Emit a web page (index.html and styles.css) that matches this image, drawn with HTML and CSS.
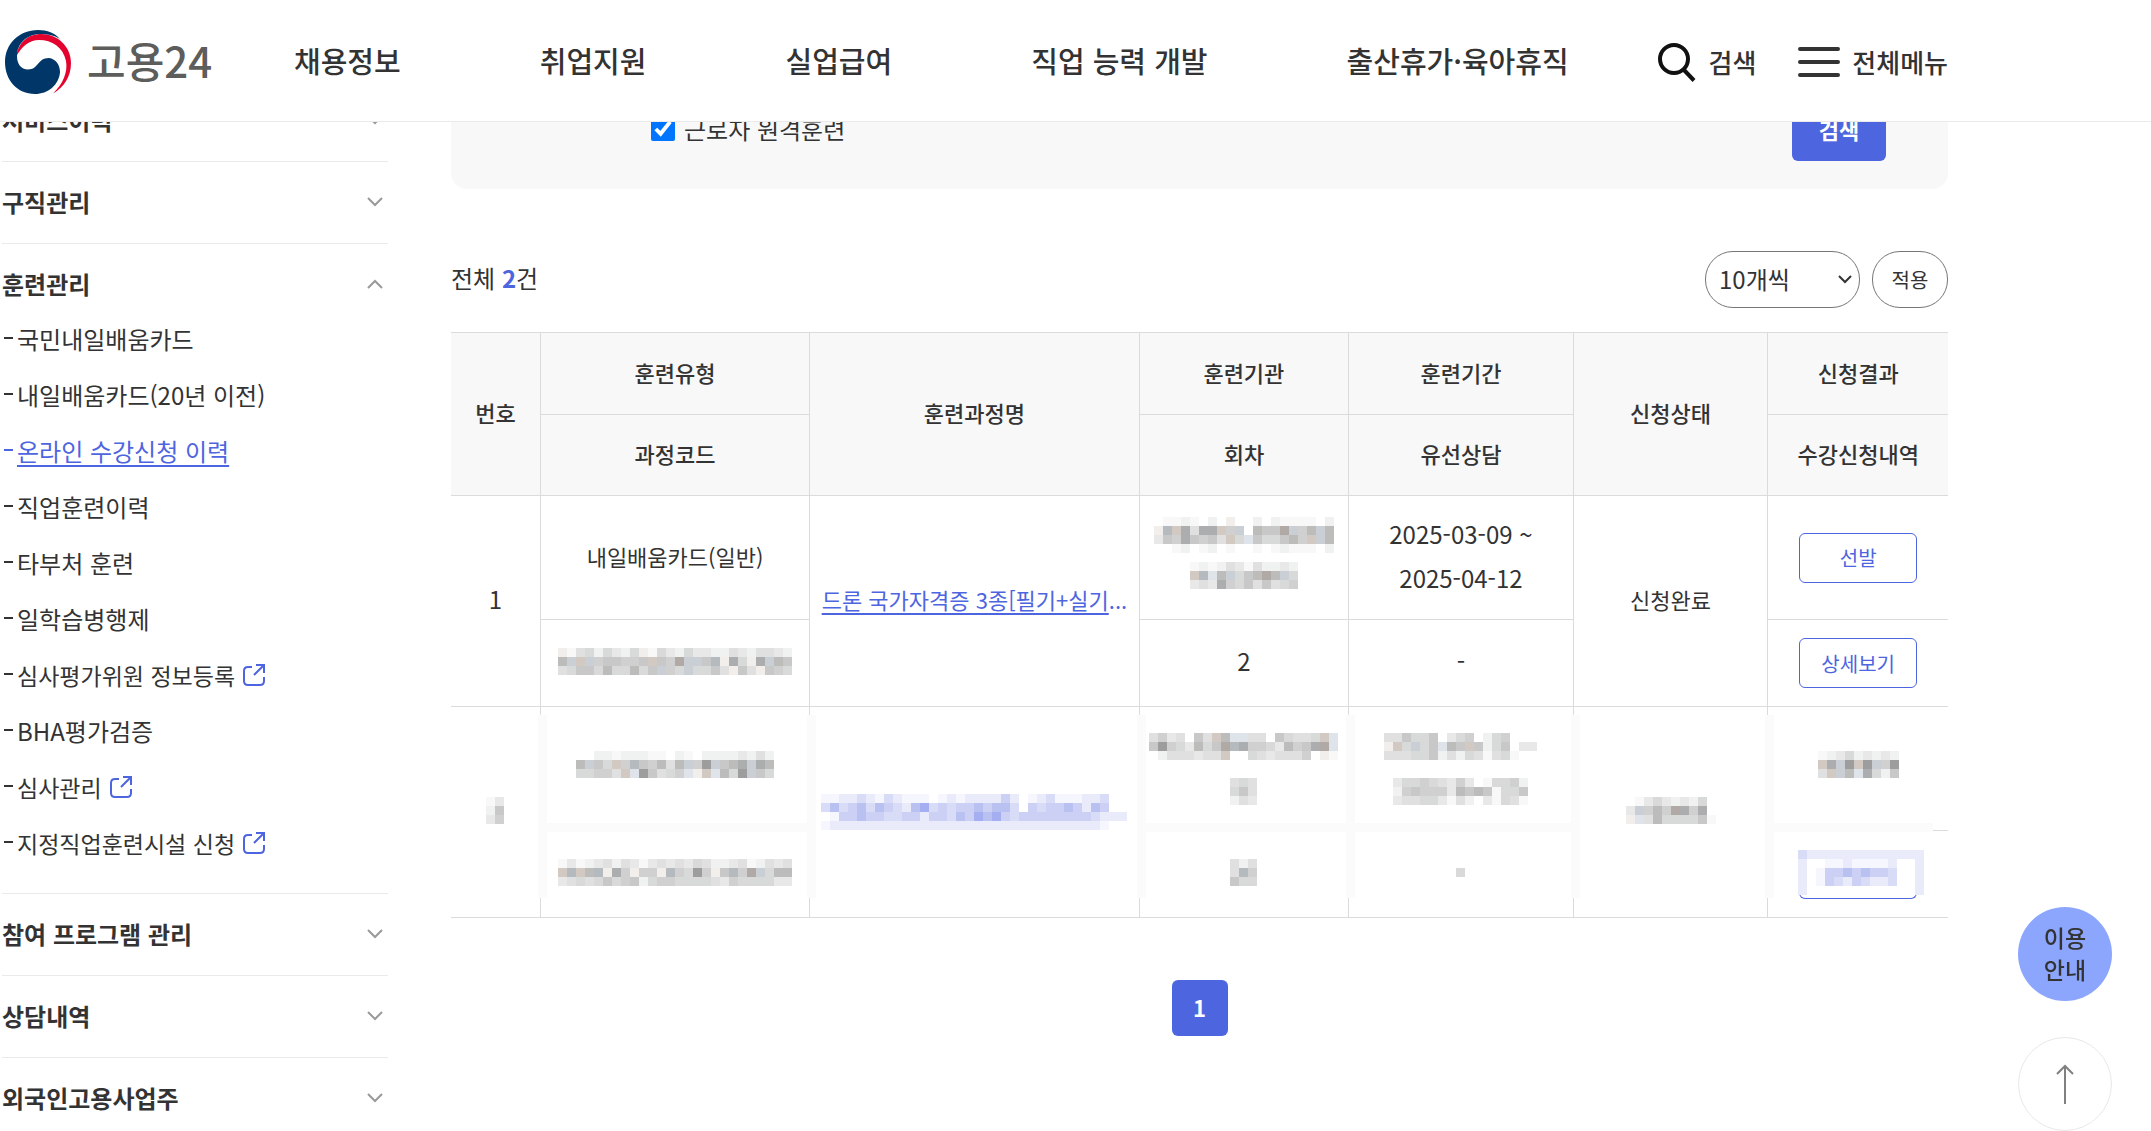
FILE: index.html
```html
<!DOCTYPE html>
<html lang="ko">
<head>
<meta charset="utf-8">
<meta name="viewport" content="width=device-width, initial-scale=1">
<title>고용24 - 온라인 수강신청 이력</title>
<link rel="stylesheet" href="styles.css">
</head>
<body>
<header class="header">
  <a class="logo" href="#">
    <svg class="logo-mark" viewBox="0 0 66 64" aria-hidden="true">
      <path fill="#e4032e" d="M11 27C13 13 22 5 34 4C52 3 66 16 66 33C66 47 59 57 48 63.500C58 54 63 42 61 31C58 17 47 10 34 10C24 10 16 17 11 27Z"/>
      <path fill="#003668" d="M33 0C42 0 50 3 55 9C49 5 42 4 34 4C21 5 12 14 12 26C12 34 16 39.500 23 39.500C34 39.500 32 28 44 28C51 29 55 35 55 42C54 55 43 64 30 64C12 64 0 50 0 32C0 14 14 0 33 0Z"/>
    </svg>
    <span class="logo-text">고용24</span>
  </a>
  <nav class="gnb">
    <a href="#">채용정보</a>
    <a href="#">취업지원</a>
    <a href="#">실업급여</a>
    <a href="#">직업 능력 개발</a>
    <a href="#">출산휴가·육아휴직</a>
  </nav>
  <div class="tools">
    <button type="button" class="tool">
      <svg width="38" height="40" viewBox="0 0 38 40" fill="none" stroke="#111" stroke-width="4" aria-hidden="true"><circle cx="16" cy="17" r="14"/><path d="M26 28L36 38.500"/></svg>
      검색
    </button>
    <button type="button" class="tool">
      <svg width="42" height="30" viewBox="0 0 42 30" stroke="#333" stroke-width="4" stroke-linecap="round" aria-hidden="true"><path d="M2 2H40M2 15H40M2 28H40"/></svg>
      전체메뉴
    </button>
  </div>
</header>

<div class="page">
  <aside class="side">
    <section class="group">
      <button type="button" class="group-head">서비스이력<svg class="chev" viewBox="0 0 16 10" aria-hidden="true"><path d="M1 1L8 8L15 1"/></svg></button>
    </section>
    <section class="group">
      <button type="button" class="group-head">구직관리<svg class="chev" viewBox="0 0 16 10" aria-hidden="true"><path d="M1 1L8 8L15 1"/></svg></button>
    </section>
    <section class="group">
      <button type="button" class="group-head open" aria-expanded="true">훈련관리<svg class="chev" viewBox="0 0 16 10" aria-hidden="true"><path d="M1 9L8 2L15 9"/></svg></button>
      <ul class="sub">
        <li><a href="#">국민내일배움카드</a></li>
        <li><a href="#">내일배움카드(20년 이전)</a></li>
        <li class="on"><a href="#" aria-current="page">온라인 수강신청 이력</a></li>
        <li><a href="#">직업훈련이력</a></li>
        <li><a href="#">타부처 훈련</a></li>
        <li><a href="#">일학습병행제</a></li>
        <li><a class="ext" href="#">심사평가위원 정보등록<svg viewBox="0 0 22 22" aria-hidden="true"><path d="M9 3H5Q1 3 1 7V17Q1 21 5 21H17Q21 21 21 17V13M13 1H21V9M21 1L11 11"/></svg></a></li>
        <li><a href="#">BHA평가검증</a></li>
        <li><a class="ext" href="#">심사관리<svg viewBox="0 0 22 22" aria-hidden="true"><path d="M9 3H5Q1 3 1 7V17Q1 21 5 21H17Q21 21 21 17V13M13 1H21V9M21 1L11 11"/></svg></a></li>
        <li><a class="ext" href="#">지정직업훈련시설 신청<svg viewBox="0 0 22 22" aria-hidden="true"><path d="M9 3H5Q1 3 1 7V17Q1 21 5 21H17Q21 21 21 17V13M13 1H21V9M21 1L11 11"/></svg></a></li>
      </ul>
    </section>
    <section class="group">
      <button type="button" class="group-head">참여 프로그램 관리<svg class="chev" viewBox="0 0 16 10" aria-hidden="true"><path d="M1 1L8 8L15 1"/></svg></button>
    </section>
    <section class="group">
      <button type="button" class="group-head">상담내역<svg class="chev" viewBox="0 0 16 10" aria-hidden="true"><path d="M1 1L8 8L15 1"/></svg></button>
    </section>
    <section class="group">
      <button type="button" class="group-head">외국인고용사업주<svg class="chev" viewBox="0 0 16 10" aria-hidden="true"><path d="M1 1L8 8L15 1"/></svg></button>
    </section>
  </aside>

  <main class="main">
    <form class="filter">
      <label class="check"><input type="checkbox" checked><span>근로자 원격훈련</span></label>
      <button type="button" class="btn-search">검색</button>
    </form>

    <div class="list-head">
      <p class="total">전체 <strong>2</strong>건</p>
      <div class="list-tools">
        <div class="select-wrap">
          <select class="per-page" aria-label="페이지당 개수"><option>10개씩</option></select>
          <svg class="select-arrow" viewBox="0 0 14 9" aria-hidden="true"><path d="M1 1L7 7L13 1"/></svg>
        </div>
        <button type="button" class="btn-apply">적용</button>
      </div>
    </div>

    <table class="list">
      <colgroup><col class="c-no"><col class="c-type"><col class="c-name"><col class="c-org"><col class="c-term"><col class="c-state"><col class="c-result"></colgroup>
      <thead>
        <tr class="h-top"><th rowspan="2">번호</th><th>훈련유형</th><th rowspan="2">훈련과정명</th><th>훈련기관</th><th>훈련기간</th><th rowspan="2">신청상태</th><th>신청결과</th></tr>
        <tr class="h-bottom"><th>과정코드</th><th>회차</th><th>유선상담</th><th>수강신청내역</th></tr>
      </thead>
      <tbody>
        <tr class="r-top">
          <td rowspan="2" class="num">1</td>
          <td>내일배움카드(일반)</td>
          <td rowspan="2" class="name"><a class="course" href="#">드론 국가자격증 3종[필기+실기</a><span class="more">...</span></td>
          <td class="center"><svg class="mosaic" data-cells=".0010.1.n..1.10000.1/ndw8388w5c.766kc57c7/26586563w4l644675wc7/..01.01.0..0.01000.1"></svg><svg class="mosaic near" data-cells="010132031121/wdl7c467k7c4/232854636345/............"></svg></td>
          <td class="num">2025-03-09 ~<br>2025-04-12</td>
          <td rowspan="2">신청완료</td>
          <td class="center"><button type="button" class="btn-line">선발</button></td>
        </tr>
        <tr class="r-bottom">
          <td><svg class="mosaic" data-cells="n03414214n0421422113213321/7cwc566556w65kcc6dn84n8c76/34664744746c54c4463n63n654"></svg></td>
          <td class="num">2</td>
          <td class="num">-</td>
          <td class="center"><button type="button" class="btn-line">상세보기</button></td>
        </tr>
        <tr class="r-top masked">
          <td rowspan="2"><svg class="mosaic" data-cells="02/16/25"></svg></td>
          <td class="band center"><svg class="mosaic" data-cells="..11011100.10.11112131/7c64w5d65737c59c678c87/44553wl96345lnwl749c64/......................"></svg></td>
          <td rowspan="2" class="tall band center"><svg class="mosaic" data-cells="AABBCBACBAAA.ABABBBBDB.ABCAAABBC../CECDECEDCBEFCDCDDEDEEC.DCDDEDBED../.ADDEDDCCDDBDDCEDFEFDCDDDDDDDDCBBB/ABBBBBBBBBBBBBBBBBBBBBBBBBBBBBBA.."></svg></td>
          <td class="band center"><svg class="mosaic" data-cells="3523.63w7ll33.64334wl/69542746kd855427568kl/.1333233w..4323335.n0"></svg><svg class="mosaic far" data-cells="343/463/132"></svg></td>
          <td class="band center"><svg class="mosaic" data-cells="336446.245.145.../nw4c46l76w6146.22/333446131430340.."></svg><svg class="mosaic far" data-cells="244543252.04451/156555276760446/233442031.20430"></svg></td>
          <td rowspan="2" class="tall band"><svg class="mosaic" data-cells=".02421214./2c575k858./nl37444460"></svg></td>
          <td class="band center"><svg class="mosaic" data-cells="012412121/w8c9w9c59/3wc7l8416/........."></svg></td>
        </tr>
        <tr class="r-bottom masked">
          <td class="band cross"><svg class="mosaic" data-cells="02012313202323243112301323/wdw7dn85n55nd5495n6d5kc477/23434645614554444325444422"></svg></td>
          <td class="band cross"><svg class="mosaic" data-cells="313/3d5/644"></svg></td>
          <td class="band cross"><svg class="mosaic" data-cells="4"></svg></td>
          <td class="band cross center last"><button type="button" class="btn-line covered" aria-label="신청내역"><svg class="mosaic" data-cells="CBBBBBBBBBBBBB/B..AABAAAAB..B/B.ADDEDEDDC..B/B.ADCBDCBBC..B/B............B"></svg></button></td>
        </tr>
      </tbody>
    </table>

    <nav class="paging" aria-label="페이지"><a href="#" aria-current="page">1</a></nav>
  </main>
</div>

<div class="floating">
  <button type="button" class="guide">이용<br>안내</button>
  <button type="button" class="to-top" aria-label="맨 위로"><svg width="18" height="40" viewBox="0 0 18 40" aria-hidden="true"><path d="M9 40V2M1 10L9 2L17 10"/></svg></button>
</div>
<script src="mosaic.js"></script>
</body>
</html>
```
FILE: styles.css
```css
* { box-sizing: border-box; }
body {
  margin: 0;
  padding-top: 80px;
  background: #fff;
  color: #333;
  font-family: "Noto Sans CJK KR", sans-serif;
  font-size: 22px;
  overflow: hidden;
}
a { color: inherit; text-decoration: none; }
button, select { font-family: inherit; color: inherit; margin: 0; padding: 0; cursor: pointer; }
ul, p { margin: 0; padding: 0; list-style: none; }

.header {
  position: fixed;
  top: 0;
  left: 0;
  right: 0;
  z-index: 10;
  display: flex;
  align-items: center;
  height: 122px;
  padding: 2px 203px 0 5px;
  background: #fff;
  border-bottom: 1px solid #eaeaea;
}
.logo { display: flex; align-items: center; gap: 16px; width: 289px; }
.logo-mark { width: 66px; height: 64px; }
.logo-text { padding-bottom: 4px; font-size: 42px; line-height: 60px; font-weight: 500; color: #5d5d5b; }
.gnb { display: flex; gap: 139px; padding-bottom: 4px; font-size: 29px; font-weight: 500; line-height: 44px; white-space: nowrap; }
.tools { display: flex; gap: 42px; margin-left: auto; }
.tool {
  display: flex;
  align-items: center;
  gap: 12px;
  border: 0;
  background: none;
  font-size: 26px;
  font-weight: 500;
  line-height: 40px;
  white-space: nowrap;
}

.page { display: flex; gap: 63px; padding: 0 203px 0 2px; }
.side { flex: none; width: 386px; }
.group { border-bottom: 1px solid #eaeaea; }
.group-head {
  display: flex;
  align-items: center;
  justify-content: space-between;
  width: 100%;
  padding: 22px 5px 23px 0;
  border: 0;
  background: none;
  font-size: 24px;
  font-weight: 700;
  line-height: 36px;
  text-align: left;
}
.group-head.open { padding-bottom: 9px; }
.chev { width: 16px; height: 10px; fill: none; stroke: #999; stroke-width: 2; }
.sub { padding-bottom: 22px; }
.sub li { display: flex; align-items: center; height: 56px; font-size: 24px; line-height: 36px; }
.sub li::before { content: ""; width: 9px; height: 2px; margin: 0 4px 2px 2px; background: currentColor; }
.sub .on { color: #4e65e0; }
.sub .on a { text-decoration: underline; text-decoration-thickness: 2px; text-underline-offset: 4px; }
.sub .ext { display: flex; align-items: center; gap: 8px; font-size: 23px; }
.sub .ext svg { width: 22px; height: 22px; fill: none; stroke: #4e65e0; stroke-width: 2; }

.main { flex: 1; min-width: 0; }
.filter {
  display: flex;
  align-items: center;
  justify-content: space-between;
  padding: 17px 62px 28px 200px;
  background: #f8f8f8;
  border-radius: 0 0 16px 16px;
}
.check { display: flex; align-items: center; gap: 9px; font-size: 24px; line-height: 36px; }
.check input { width: 24px; height: 24px; margin: 0; accent-color: #0075ff; }
.btn-search {
  width: 94px;
  height: 64px;
  border: 0;
  border-radius: 6px;
  background: #4e65e0;
  color: #fff;
  font-size: 22px;
  font-weight: 700;
}

.list-head { display: flex; align-items: center; justify-content: space-between; padding: 62px 0 24px; }
.total { padding-bottom: 3px; font-size: 24px; line-height: 36px; }
.total strong { color: #4e65e0; }
.list-tools { display: flex; gap: 12px; }
.select-wrap { position: relative; }
.per-page {
  appearance: none;
  width: 155px;
  height: 57px;
  padding: 0 13px 3px;
  border: 1px solid #767676;
  border-radius: 28px;
  background: #fff;
  font-size: 24px;
}
.select-arrow {
  position: absolute;
  right: 8px;
  top: 24px;
  width: 14px;
  height: 9px;
  fill: none;
  stroke: #333;
  stroke-width: 2;
  pointer-events: none;
}
.btn-apply { width: 76px; height: 57px; border: 1px solid #767676; border-radius: 28px; background: #fff; font-size: 20px; }

.list {
  width: 100%;
  table-layout: fixed;
  border-collapse: separate;
  border-spacing: 0;
  border-top: 1px solid #dbdbdb;
  line-height: 44px;
  text-align: center;
}
.c-no { width: 6%; }
.c-type { width: 18%; }
.c-name { width: 22%; }
.c-org { width: 14%; }
.c-term { width: 15%; }
.c-state { width: 13%; }
.c-result { width: 12%; }
.list th, .list td {
  position: relative;
  padding: 0 0 4px;
  border-right: 1px solid #dbdbdb;
  border-bottom: 1px solid #dbdbdb;
  vertical-align: middle;
}
.list th:last-child, .list td:last-child { border-right: 0; }
.list th { background: #f8f8f8; font-weight: 500; }
.list .center { padding: 0; }
.list .num { font-size: 24px; }
.h-top { height: 82px; }
.h-bottom { height: 81px; }
.r-top { height: 124px; }
.r-bottom { height: 87px; }
.name { white-space: nowrap; }
.course { color: #4e65e0; text-decoration: underline; text-decoration-thickness: 2px; text-underline-offset: 4px; }
.more { color: #4e65e0; }
.btn-line {
  position: relative;
  display: block;
  width: 118px;
  height: 50px;
  margin: 0 auto;
  border: 1px solid #4e65e0;
  border-radius: 6px;
  background: #fff;
  color: #4e65e0;
  font-size: 20px;
}

/* pixelated blocks that hide private values */
.mosaic { display: block; margin: 0 auto; }
.mosaic.near { margin-top: 9px; }
.mosaic.far { margin-top: 18px; }
.covered .mosaic { position: absolute; left: -2px; top: 0; background: #fff; }
.covered { border-top-color: #fff; }
.masked .band::after {
  content: "";
  position: absolute;
  z-index: 1;
  left: -3px;
  top: 8px;
  bottom: -1px;
  width: 9px;
  background: #fbfbfb;
}
.masked .tall.band::after { bottom: 19px; }
.masked .cross::after { top: 0; bottom: 19px; }
.masked .cross::before {
  content: "";
  position: absolute;
  left: 0;
  right: 0;
  top: -8px;
  height: 9px;
  background: #fbfbfb;
}
.masked .last::before { right: 15px; }

.paging { display: flex; justify-content: center; padding-top: 62px; }
.paging a {
  width: 56px;
  height: 56px;
  border-radius: 6px;
  background: #4e65e0;
  color: #fff;
  font-weight: 700;
  line-height: 54px;
  text-align: center;
}

.floating { position: fixed; right: 39px; bottom: 0; z-index: 5; display: flex; flex-direction: column; gap: 36px; }
.floating button { width: 94px; height: 94px; border-radius: 50%; }
.guide { padding-bottom: 2px; border: 0; background: #8ca6fe; font-size: 23px; font-weight: 500; line-height: 32px; }
.to-top { display: flex; align-items: center; justify-content: center; border: 1px solid #e8e8e8; background: #fff; }
.to-top path { fill: none; stroke: #808080; stroke-width: 2; }
```
FILE: mosaic.js
```js
// Draws the pixelated blocks: one character per 9px cell, rows separated by "/".
const CELL = 9;
const COLORS = {
  0: "#f8f8f8", 1: "#f0f1f1", 2: "#e8e8e8", 3: "#e0e0e0", 4: "#d8d9d9",
  5: "#d0d0d0", 6: "#c8c8c8", 7: "#bcbcbb", 8: "#acadae", 9: "#9d9d9e",
  n: "#f1eeeb", w: "#d2c9c3", k: "#b1a9a5", c: "#cacfd5", d: "#b5babf", l: "#dfe4ea",
  A: "#f5f6fe", B: "#e9ebfa", C: "#d9dcf6", D: "#cbd0f4", E: "#b9c1f1", F: "#a5aef0"
};
document.querySelectorAll("svg[data-cells]").forEach((svg) => {
  const rows = svg.dataset.cells.split("/");
  svg.setAttribute("width", rows[0].length * CELL);
  svg.setAttribute("height", rows.length * CELL);
  svg.setAttribute("aria-hidden", "true");
  rows.forEach((row, y) => {
    [...row].forEach((key, x) => {
      if (!COLORS[key]) return;
      const rect = document.createElementNS("http://www.w3.org/2000/svg", "rect");
      rect.setAttribute("x", x * CELL);
      rect.setAttribute("y", y * CELL);
      rect.setAttribute("width", CELL);
      rect.setAttribute("height", CELL);
      rect.setAttribute("fill", COLORS[key]);
      svg.appendChild(rect);
    });
  });
});
```
